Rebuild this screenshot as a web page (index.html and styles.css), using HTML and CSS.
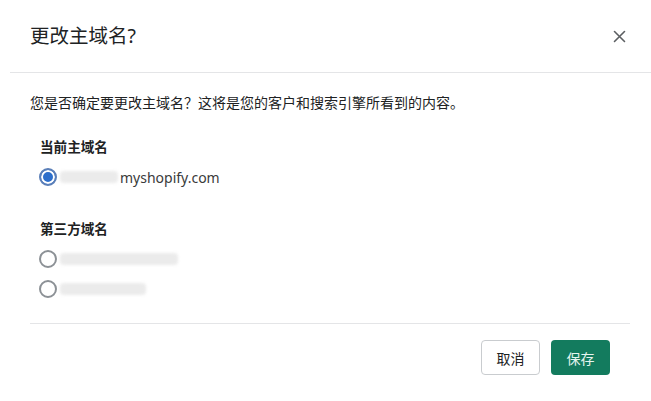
FILE: index.html
```html
<!DOCTYPE html>
<html>
<head>
    <title>更改主域名?</title>
    <link rel="stylesheet" href="styles.css">
</head>
<body>
    <div class="dialog">
        <div class="dialog-header">
            <h2 class="dialog-title">更改主域名?</h2>
            <button class="close-btn" aria-label="关闭">
                <svg width="13" height="13" viewBox="0 0 13 13">
                    <path d="M1.5 1.5 L11.5 11.5 M11.5 1.5 L1.5 11.5" stroke="#5c5f62" stroke-width="1.6" stroke-linecap="round"/>
                </svg>
            </button>
        </div>

        <div class="dialog-body">
            <p class="intro">您是否确定要更改主域名？这将是您的客户和搜索引擎所看到的内容。</p>

            <div class="section section-current">
                <div class="section-label">当前主域名</div>
                <label class="radio-row">
                    <span class="radio checked"></span>
                    <span class="masked" style="width: 58px"></span>
                    <span class="domain">myshopify.com</span>
                </label>
            </div>

            <div class="section section-third">
                <div class="section-label">第三方域名</div>
                <label class="radio-row">
                    <span class="radio"></span>
                    <span class="masked" style="width: 118px"></span>
                </label>
                <label class="radio-row">
                    <span class="radio"></span>
                    <span class="masked" style="width: 86px"></span>
                </label>
            </div>
        </div>

        <div class="dialog-footer">
            <button class="btn btn-cancel">取消</button>
            <button class="btn btn-save">保存</button>
        </div>
    </div>
</body>
</html>
```

FILE: styles.css
```css
body {
    margin: 0;
    background-color: #fff;
    font-family: "Noto Sans", "Noto Sans CJK SC", sans-serif;
    color: #202223;
}

.dialog {
    width: 651px;
    height: 401px;
    background-color: #fff;
}

.dialog-header {
    height: 72px;
    margin-left: 10px;
    padding: 0 25px 0 20px;
    display: flex;
    align-items: center;
    justify-content: space-between;
    border-bottom: 1px solid #e4e5e7;
}

.dialog-title {
    margin: 0;
    font-size: 19.5px;
    font-weight: normal;
    line-height: 24px;
    color: #202223;
}

.close-btn {
    border: none;
    background: none;
    padding: 0;
    width: 13px;
    height: 13px;
    cursor: pointer;
    display: flex;
}

.dialog-body {
    padding: 20px 21px 0 30px;
}

.intro {
    margin: 0;
    font-size: 14px;
    line-height: 20px;
}

.section {
    padding-left: 10px;
}

.section-current {
    margin-top: 24px;
}

.section-third {
    margin-top: 27px;
}

.section-label {
    font-size: 13.6px;
    font-weight: bold;
    line-height: 20px;
    margin-bottom: 5px;
}

.radio-row {
    height: 30px;
    display: flex;
    align-items: center;
    font-size: 14px;
}

.radio {
    width: 18px;
    height: 18px;
    box-sizing: border-box;
    margin-left: -1px;
    border: 2px solid #8c9196;
    border-radius: 50%;
    margin-right: 3px;
    flex-shrink: 0;
}

.radio.checked {
    border-color: #5b7fb8;
    background-color: #2c6ecb;
    box-shadow: inset 0 0 0 2px #fff;
}

.masked {
    display: inline-block;
    height: 12px;
    border-radius: 4px;
    background-color: #ebebeb;
    filter: blur(1.5px);
}

.domain {
    color: #3a3a3a;
    margin-left: 2px;
}

.dialog-footer {
    margin: 19px 21px 0 30px;
    padding: 16px 20px 0 0;
    border-top: 1px solid #e4e5e7;
    display: flex;
    justify-content: flex-end;
    gap: 11px;
}

.btn {
    height: 35px;
    width: 59px;
    border-radius: 4px;
    font-family: "Noto Sans", "Noto Sans CJK SC", sans-serif;
    font-size: 14px;
    cursor: pointer;
}

.btn-cancel {
    background-color: #fff;
    border: 1px solid #c9cccf;
    color: #202223;
}

.btn-save {
    background-color: #137b5e;
    border: none;
    color: #e6f5ef;
}
```
